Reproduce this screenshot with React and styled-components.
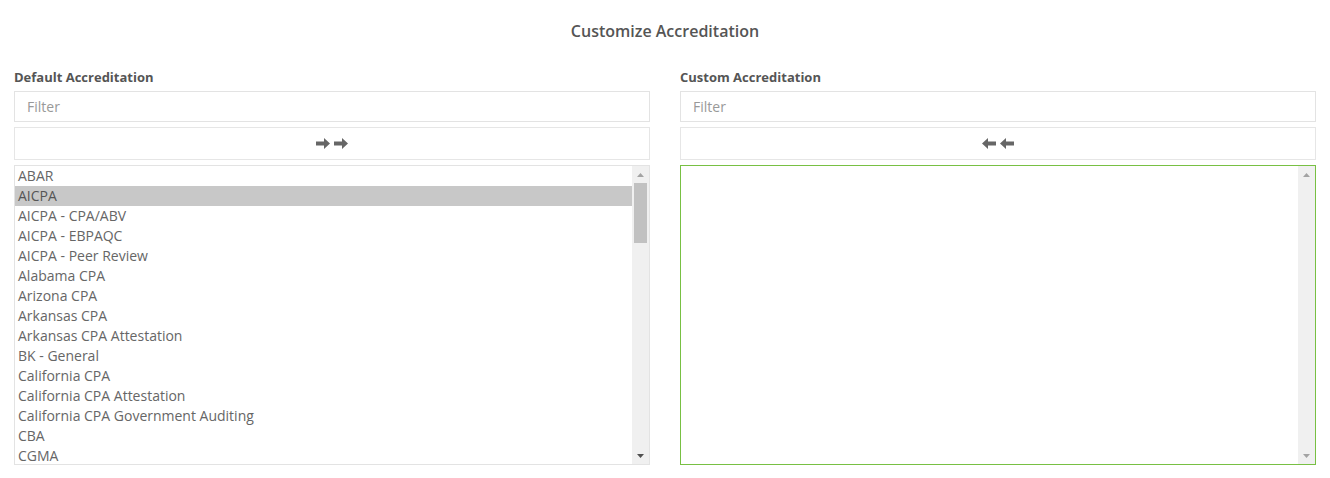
import React from 'react';
import styled, { createGlobalStyle } from 'styled-components';

const GlobalStyle = createGlobalStyle`
  body {
    margin: 0;
    background: #fff;
    font-family: "Open Sans", "Liberation Sans", sans-serif;
    color: #666;
  }
`;

const Page = styled.div`
  padding: 0 14px;
`;

const Title = styled.h2`
  margin: 0;
  padding-top: 20px;
  height: 22px;
  line-height: 22px;
  text-align: center;
  font-size: 16px;
  font-weight: 600;
  color: #555;
`;

const Columns = styled.div`
  display: grid;
  grid-template-columns: 1fr 1fr;
  column-gap: 30px;
  margin-top: 26px;
`;

const Column = styled.div`
  display: flex;
  flex-direction: column;
`;

const Label = styled.label`
  font-size: 13px;
  font-weight: 700;
  color: #555;
  line-height: 18px;
  height: 18px;
  margin-bottom: 5px;
`;

const FilterInput = styled.input`
  box-sizing: border-box;
  height: 31px;
  width: 100%;
  border: 1px solid #e3e3e3;
  padding: 0 12px;
  font-family: inherit;
  font-size: 14px;
  color: #666;
  outline: none;
  &::placeholder {
    color: #999;
  }
`;

const MoveButton = styled.button`
  box-sizing: border-box;
  margin-top: 5px;
  height: 33px;
  width: 100%;
  border: 1px solid #e6e6e6;
  background: #fff;
  display: flex;
  align-items: center;
  justify-content: center;
  gap: 4px;
  padding: 0;
  cursor: pointer;
`;

const ListBox = styled.div`
  box-sizing: border-box;
  margin-top: 5px;
  height: 300px;
  border: 1px solid ${p => (p.$active ? '#78c043' : '#e3e3e3')};
  display: grid;
  grid-template-columns: 1fr 17px;
  overflow: hidden;
`;

const Rows = styled.ul`
  margin: 0;
  padding: 0;
  list-style: none;
  overflow: hidden;
`;

const Row = styled.li`
  height: 20px;
  line-height: 20px;
  padding-left: 3px;
  font-size: 14px;
  color: ${p => (p.$selected ? '#555' : '#666')};
  background: ${p => (p.$selected ? '#c8c8c8' : 'transparent')};
  white-space: nowrap;
`;

const Track = styled.div`
  background: #f0f0f0;
  display: flex;
  flex-direction: column;
  align-items: center;
  padding: 0 2px;
`;

const ArrowCap = styled.div`
  height: 17px;
  width: 100%;
  display: flex;
  align-items: center;
  justify-content: center;
  flex: none;
`;

const Thumb = styled.div`
  width: 100%;
  height: 60px;
  background: #c1c1c1;
  flex: none;
`;

const Spacer = styled.div`
  flex: 1;
`;

const Caret = ({ up, color }) => (
  <svg width="7" height="4" viewBox="0 0 7 4">
    <path d={up ? 'M0 4 L3.5 0 L7 4 Z' : 'M0 0 L7 0 L3.5 4 Z'} fill={color} />
  </svg>
);

const Arrow = ({ left }) => (
  <svg width="14" height="11" viewBox="0 0 14 11" style={left ? { transform: 'scaleX(-1)' } : undefined}>
    <path d="M0 3.5 H8 V0 L14 5.5 L8 11 V7.5 H0 Z" fill="#666" />
  </svg>
);

const Scrollbar = ({ thumb }) => (
  <Track>
    <ArrowCap>
      <Caret up color="#a3a3a3" />
    </ArrowCap>
    {thumb && <Thumb />}
    <Spacer />
    <ArrowCap>
      <Caret color={thumb ? '#505050' : '#a3a3a3'} />
    </ArrowCap>
  </Track>
);

const defaults = [
  'ABAR',
  'AICPA',
  'AICPA - CPA/ABV',
  'AICPA - EBPAQC',
  'AICPA - Peer Review',
  'Alabama CPA',
  'Arizona CPA',
  'Arkansas CPA',
  'Arkansas CPA Attestation',
  'BK - General',
  'California CPA',
  'California CPA Attestation',
  'California CPA Government Auditing',
  'CBA',
  'CGMA',
];

export default function App() {
  return (
    <>
      <GlobalStyle />
      <Page>
        <Title>Customize Accreditation</Title>
        <Columns>
          <Column>
            <Label>Default Accreditation</Label>
            <FilterInput placeholder="Filter" />
            <MoveButton>
              <Arrow />
              <Arrow />
            </MoveButton>
            <ListBox>
              <Rows>
                {defaults.map(name => (
                  <Row key={name} $selected={name === 'AICPA'}>
                    {name}
                  </Row>
                ))}
              </Rows>
              <Scrollbar thumb />
            </ListBox>
          </Column>
          <Column>
            <Label>Custom Accreditation</Label>
            <FilterInput placeholder="Filter" />
            <MoveButton>
              <Arrow left />
              <Arrow left />
            </MoveButton>
            <ListBox $active>
              <Rows />
              <Scrollbar />
            </ListBox>
          </Column>
        </Columns>
      </Page>
    </>
  );
}
